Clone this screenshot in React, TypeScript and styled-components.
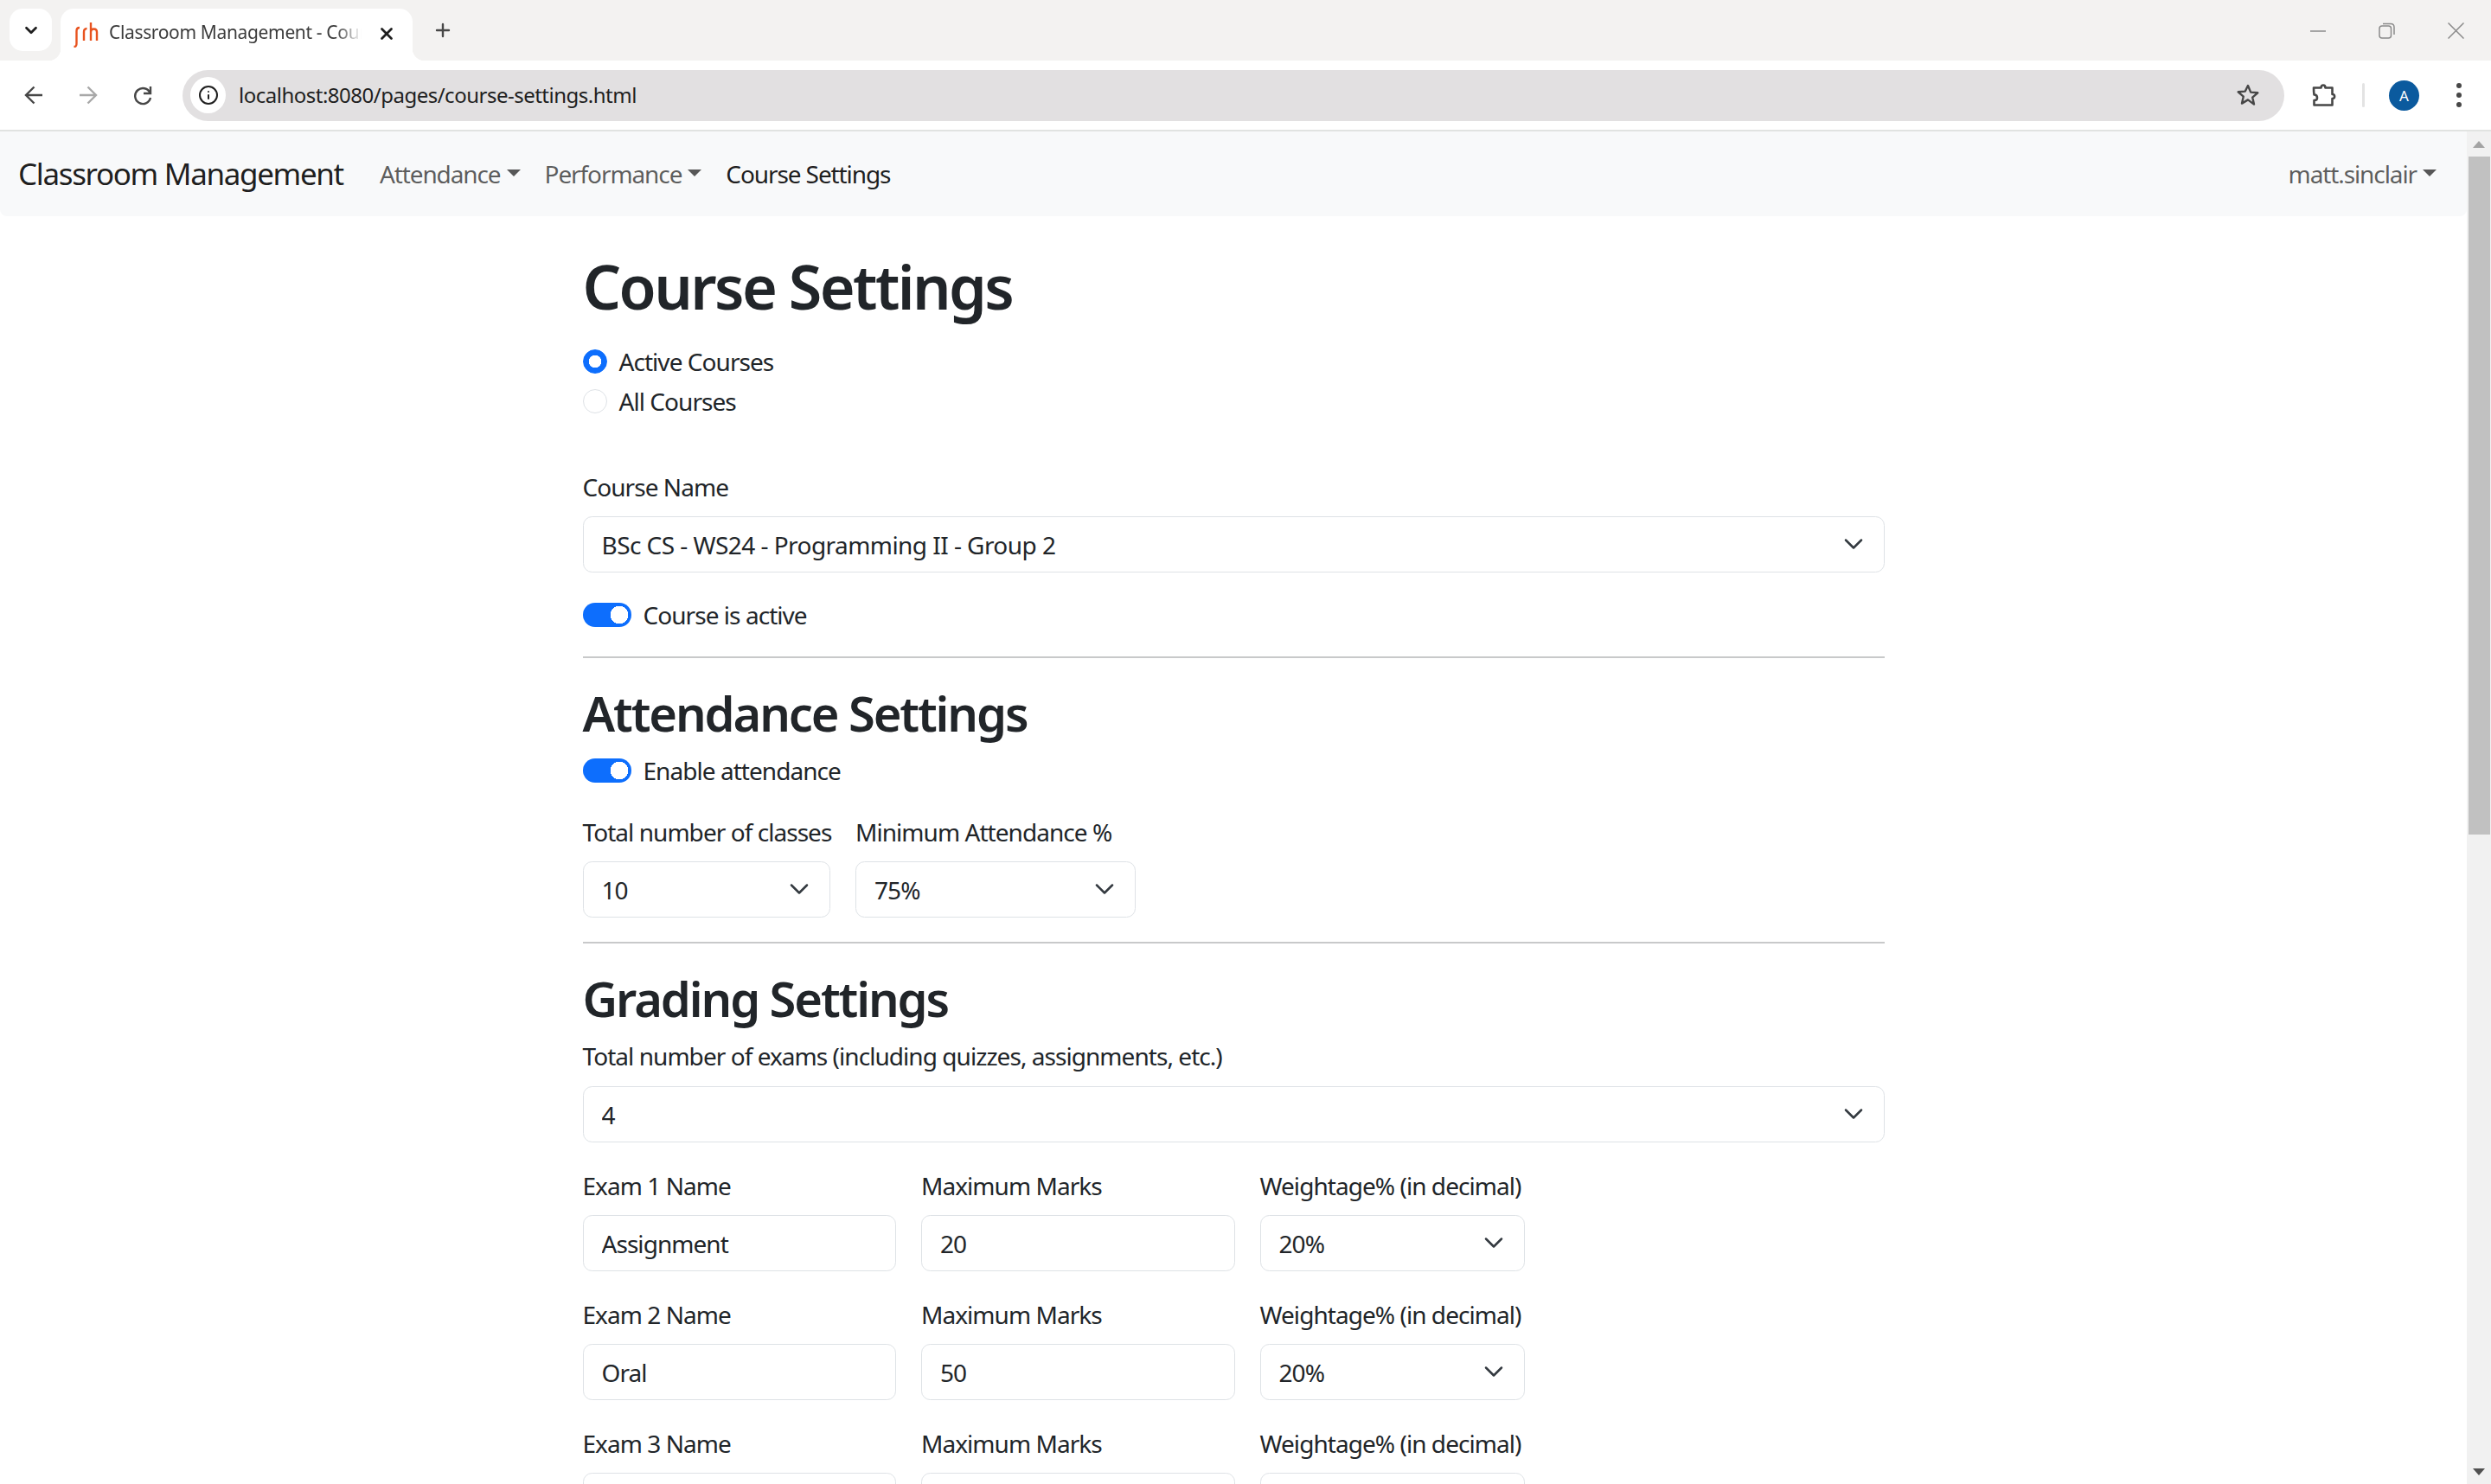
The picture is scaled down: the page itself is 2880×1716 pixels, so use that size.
import React, { FC, ReactNode } from 'react'
import styled, { createGlobalStyle } from 'styled-components'
import { ChevronDown, Info, Plus, X } from 'lucide-react'

const font = `"Noto Sans", "Open Sans", sans-serif`

const GlobalStyle = createGlobalStyle`
  html, body { margin: 0; height: 100%; overflow: hidden; background: #fff; }
  * { box-sizing: border-box; }
  body { font-family: ${font}; font-size: 28px; line-height: 42px; color: #212529; letter-spacing: -0.95px; }
`

const Frame = styled.div`
  height: 100vh;
  display: flex;
  flex-direction: column;
  overflow: hidden;
`

/* browser chrome */
const TabStrip = styled.div`
  height: 70px;
  flex: none;
  background: #f3f2f1;
  display: flex;
  align-items: flex-start;
  padding: 10px 0 0 11px;
`
const TabSearch = styled.div`
  width: 49px;
  height: 49px;
  background: #fff;
  border-radius: 15px;
  display: flex;
  align-items: center;
  justify-content: center;
  color: #1f1f1f;
`
const Tab = styled.div`
  position: relative;
  margin-left: 10px;
  width: 407px;
  height: 60px;
  background: #fff;
  border-radius: 15px 15px 0 0;
  display: flex;
  align-items: center;
  padding: 0 19px 0 14px;
  & > svg:last-child {
    margin-bottom: 3px;
  }
  &::after {
    content: '';
    position: absolute;
    right: -14px;
    bottom: 0;
    width: 14px;
    height: 14px;
    background: radial-gradient(circle at 100% 0, transparent 14px, #fff 14.5px);
  }
  &::before {
    content: '';
    position: absolute;
    left: -14px;
    bottom: 0;
    width: 14px;
    height: 14px;
    background: radial-gradient(circle at 0 0, transparent 14px, #fff 14.5px);
  }
`
const TabTitle = styled.span`
  flex: 1;
  margin: 0 18px 6px 12px;
  font-size: 21px;
  line-height: 30px;
  letter-spacing: -0.35px;
  color: #3c3c3c;
  white-space: nowrap;
  overflow: hidden;
  -webkit-mask-image: linear-gradient(to right, #000 90%, transparent 100%);
  mask-image: linear-gradient(to right, #000 90%, transparent 100%);
`
const NewTab = styled.div`
  margin: 13px 0 0 23px;
  color: #474747;
  display: flex;
`
const WindowButtons = styled.div`
  margin-left: auto;
  display: flex;
  align-items: center;
  gap: 61px;
  padding: 16px 31px 0 0;
`
const Toolbar = styled.div`
  height: 80px;
  flex: none;
  background: #fff;
  border-radius: 14px 18px 0 0;
  display: flex;
  align-items: center;
  padding: 0 34px 0 28px;
`
const NavIcons = styled.div`
  display: flex;
  align-items: center;
  gap: 41px;
  margin-right: 35px;
`
const Address = styled.div`
  flex: 1;
  height: 59px;
  border-radius: 30px;
  background: #e2e0e1;
  display: flex;
  align-items: center;
  padding: 0 28px 0 9px;
`
const InfoChip = styled.div`
  width: 41px;
  height: 42px;
  border-radius: 50%;
  background: #fff;
  display: flex;
  align-items: center;
  justify-content: center;
  color: #1f1f1f;
`
const Url = styled.span`
  flex: 1;
  margin-left: 15px;
  font-size: 24px;
  line-height: 32px;
  letter-spacing: -0.5px;
  color: #1f1f1f;
`
const ToolbarRight = styled.div`
  display: flex;
  align-items: center;
  margin-left: 31px;
`
const Separator = styled.div`
  width: 3px;
  height: 28px;
  background: #e3e3e3;
  border-radius: 2px;
  margin: 0 28px 0 29px;
`
const Avatar = styled.div`
  width: 35px;
  height: 35px;
  border-radius: 50%;
  background: #0b5a9e;
  color: #fff;
  font-size: 17px;
  line-height: 35px;
  text-align: center;
  letter-spacing: 0;
  margin-right: 43px;
`
const Dots = styled.div`
  display: flex;
  flex-direction: column;
  gap: 5px;
  width: 6px;
  & > i {
    width: 6px;
    height: 6px;
    border-radius: 50%;
    background: #474747;
  }
`
const Viewport = styled.div`
  flex: 1;
  min-height: 0;
  display: flex;
  border-top: 2px solid #e1e3e1;
`
const Page = styled.div`
  flex: 1;
  min-width: 0;
  overflow: hidden;
`
const ScrollBar = styled.div`
  width: 28px;
  flex: none;
  background: #f1f1f1;
  display: flex;
  flex-direction: column;
`
const ScrollArrow = styled.div`
  height: 29px;
  flex: none;
  display: flex;
  align-items: center;
  justify-content: center;
`
const ScrollTrack = styled.div`
  flex: 1;
  padding: 0 1px 0 2px;
`
const ScrollThumb = styled.div`
  height: 784px;
  background: #c1c1c1;
`

/* bootstrap navbar */
const Navbar = styled.nav`
  height: 98px;
  background: #f8f9fa;
  border-radius: 0 0 8px 8px;
  display: flex;
  align-items: center;
  padding: 0 21px;
`
const Brand = styled.a`
  font-size: 35px;
  line-height: 52px;
  color: rgba(0, 0, 0, 0.9);
  margin-right: 28px;
  letter-spacing: -1.35px;
`
const NavLink = styled.a<{ $active?: boolean; $end?: boolean }>`
  padding: 14px;
  display: flex;
  align-items: center;
  letter-spacing: -1.1px;
  color: ${({ $active }) => ($active ? 'rgba(0, 0, 0, 0.9)' : 'rgba(0, 0, 0, 0.65)')};
  margin-left: ${({ $end }) => ($end ? 'auto' : '0')};
`
const Caret = styled.span`
  width: 0;
  height: 0;
  margin-left: 7px;
  margin-top: -3px;
  border-top: 8.4px solid currentColor;
  border-left: 8.4px solid transparent;
  border-right: 8.4px solid transparent;
`

/* form */
const Main = styled.main`
  width: 1505px;
  margin: 0 auto;
  padding-top: 39px;
`
const Title = styled.h1`
  margin: 0 0 24px;
  font-size: 70px;
  line-height: 84px;
  font-weight: 600;
  letter-spacing: -2.6px;
`
const SectionTitle = styled.h2`
  margin: 0 0 12px;
  padding-top: 2px;
  font-size: 56px;
  line-height: 67px;
  font-weight: 600;
  letter-spacing: -2.1px;
`
const Check = styled.label<{ $gap?: number; $top?: number }>`
  display: flex;
  align-items: center;
  height: 42px;
  gap: 14px;
  margin-top: ${({ $top }) => $top ?? 0}px;
  margin-bottom: ${({ $gap }) => $gap ?? 0}px;
`
const Radio = styled.input.attrs({ type: 'radio', name: 'filter' })`
  appearance: none;
  width: 28px;
  height: 28px;
  margin: 0;
  border-radius: 50%;
  border: 1px solid #dee2e6;
  background: #fff;
  &:checked {
    border-color: #0d6efd;
    background: radial-gradient(circle, #fff 7px, #0d6efd 7.5px);
  }
`
const Switch = styled.input.attrs({ type: 'checkbox', defaultChecked: true })`
  appearance: none;
  width: 56px;
  height: 28px;
  margin: 0;
  border-radius: 14px;
  background: radial-gradient(circle 10.5px at 42px 14px, #fff 97%, transparent 100%), #0d6efd;
`
const Label = styled.label<{ $gap?: number }>`
  display: block;
  height: 42px;
  margin-bottom: ${({ $gap }) => $gap ?? 13}px;
  white-space: nowrap;
`
const SelectBox = styled.div`
  position: relative;
  width: 100%;
  & > svg {
    position: absolute;
    right: 24px;
    top: 20px;
    pointer-events: none;
    color: #343a40;
  }
`
const Select = styled.select<{ $spacing?: number }>`
  appearance: none;
  display: block;
  width: 100%;
  height: 65px;
  padding: 0 70px 0 21px;
  border: 1px solid #dee2e6;
  border-radius: 10.5px;
  background: #fff;
  color: #212529;
  font: inherit;
  letter-spacing: ${({ $spacing }) => ($spacing !== undefined ? `${$spacing}px` : 'inherit')};
`
const TextInput = styled.input.attrs({ type: 'text', readOnly: true })`
  display: block;
  width: 100%;
  height: 65px;
  padding: 0 21px;
  border: 1px solid #dee2e6;
  border-radius: 10.5px;
  background: #fff;
  color: #212529;
  font: inherit;
  letter-spacing: inherit;
`
const Rule = styled.hr<{ $top: number }>`
  margin: ${({ $top }) => $top}px 0 28px;
  border: 0;
  border-top: 2px solid #c8c9ca;
`
const Row = styled.div<{ $columns: string; $bottom?: number }>`
  display: grid;
  grid-template-columns: ${({ $columns }) => $columns};
  column-gap: 29px;
  margin-bottom: ${({ $bottom }) => $bottom ?? 0}px;
`
const RadioGroup = styled.div`
  margin-bottom: 57px;
`
const ExamList = styled.div`
  padding-top: 29px;
`

const Chevron: FC = () => (
  <svg width="24" height="24" viewBox="0 0 16 16" fill="none" stroke="currentColor" strokeWidth="1.7" strokeLinecap="round" strokeLinejoin="round">
    <path d="m2 5 6 6 6-6" />
  </svg>
)

const Dropdown: FC<{ value: string; spacing?: number }> = ({ value, spacing }) => (
  <SelectBox>
    <Select defaultValue={value} $spacing={spacing}>
      <option>{value}</option>
    </Select>
    <Chevron />
  </SelectBox>
)

const Field: FC<{ label: string; children: ReactNode }> = ({ label, children }) => (
  <div>
    <Label>{label}</Label>
    {children}
  </div>
)

const SrhLogo: FC = () => (
  <svg width="30" height="30" viewBox="0 0 30 30" fill="none" stroke="#e8531f" strokeWidth="2.4">
    <path d="M1.5 29c2.5 0 3-1.5 3-4V11c0-3 1-4 3.5-4" />
    <path d="M13 22V12c0-2.500 1-4 3.500-4" />
    <path d="M21 22V1M21 12c0-2 1.500-3.500 3.500-3.500S28 10 28 12v10" />
  </svg>
)

const BackIcon: FC<{ color: string; flip?: boolean }> = ({ color, flip }) => (
  <svg width="22" height="22" viewBox="0 0 22 22" fill="none" stroke={color} strokeWidth="2.4" style={flip ? { transform: 'scaleX(-1)' } : undefined}>
    <path d="M21 11H2.500M11.500 1.500 2 11l9.500 9.500" />
  </svg>
)

const ReloadIcon: FC = () => (
  <svg width="22" height="24" viewBox="0 0 22 24" fill="none" stroke="#474747" strokeWidth="2.400">
    <path d="M19.500 9.500A9 9 0 1 0 20 15" />
    <path d="M20 2v8h-8" />
  </svg>
)

const StarIcon: FC = () => (
  <svg width="28" height="28" viewBox="0 0 28 28" fill="none" stroke="#474747" strokeWidth="2.400" strokeLinejoin="round">
    <path d="m14 3 3.200 7.600 8.100.7-6.100 5.300 1.800 8L14 19.400l-7 4.200 1.800-8-6.100-5.300 8.100-.7z" />
  </svg>
)

const PuzzleIcon: FC = () => (
  <svg width="30" height="30" viewBox="0 0 30 30" fill="none" stroke="#474747" strokeWidth="2.600" strokeLinejoin="round">
    <path d="M3 6.500h8.500c0-4 5-4 5 0H24.500v7.500c3.500 0 3.500 5 0 5V26.500H3.500V21c3 0 3.500-1 3.500-3s-.5-3.500-3.500-3.500c-.5-3-.5-5-.5-8z" />
  </svg>
)

const Minimize: FC = () => (
  <svg width="18" height="18" viewBox="0 0 18 18" stroke="#8b8b8b" strokeWidth="1.500">
    <path d="M0 9h18" />
  </svg>
)
const Restore: FC = () => (
  <svg width="19" height="19" viewBox="0 0 19 19" fill="none" stroke="#8b8b8b" strokeWidth="1.500">
    <rect x="1" y="4" width="13.500" height="14" rx="3" />
    <path d="M5 1.500h9c2.500 0 4 1.500 4 4V14" />
  </svg>
)
const Close: FC = () => (
  <svg width="19" height="19" viewBox="0 0 19 19" stroke="#8b8b8b" strokeWidth="1.500">
    <path d="m.5.500 18 18M18.500.500l-18 18" />
  </svg>
)

const Triangle: FC<{ color: string; down?: boolean }> = ({ color, down }) => (
  <svg width="14" height="8" viewBox="0 0 14 8" fill={color}>
    <path d={down ? 'M0 0h14L7 8z' : 'M7 0l7 8H0z'} />
  </svg>
)

const examColumns = '362.5px 362.5px 306px'

const exams = [
  { label: 'Exam 1 Name', name: 'Assignment', marks: '20', weight: '20%' },
  { label: 'Exam 2 Name', name: 'Oral', marks: '50', weight: '20%' },
  { label: 'Exam 3 Name', name: 'Midterm', marks: '30', weight: '20%' },
]

export default function App() {
  return (
    <Frame>
      <GlobalStyle />
      <TabStrip>
        <TabSearch>
          <ChevronDown size={22} strokeWidth={3} />
        </TabSearch>
        <Tab>
          <SrhLogo />
          <TabTitle>Classroom Management - Course Settings</TabTitle>
          <X size={22} strokeWidth={3} color="#1f1f1f" />
        </Tab>
        <NewTab>
          <Plus size={24} strokeWidth={2.4} />
        </NewTab>
        <WindowButtons>
          <Minimize />
          <Restore />
          <Close />
        </WindowButtons>
      </TabStrip>
      <Toolbar>
        <NavIcons>
          <BackIcon color="#474747" />
          <BackIcon color="#a8a8a8" flip />
          <ReloadIcon />
        </NavIcons>
        <Address>
          <InfoChip>
            <Info size={24} strokeWidth={2} />
          </InfoChip>
          <Url>localhost:8080/pages/course-settings.html</Url>
          <StarIcon />
        </Address>
        <ToolbarRight>
          <PuzzleIcon />
          <Separator />
          <Avatar>A</Avatar>
          <Dots>
            <i />
            <i />
            <i />
          </Dots>
        </ToolbarRight>
      </Toolbar>
      <Viewport>
        <Page>
          <Navbar>
            <Brand>Classroom Management</Brand>
            <NavLink>
              Attendance
              <Caret />
            </NavLink>
            <NavLink>
              Performance
              <Caret />
            </NavLink>
            <NavLink $active>Course Settings</NavLink>
            <NavLink $end>
              matt.sinclair
              <Caret />
            </NavLink>
          </Navbar>
          <Main>
            <Title>Course Settings</Title>
            <RadioGroup>
              <Check $gap={4}>
                <Radio defaultChecked />
                Active Courses
              </Check>
              <Check>
                <Radio />
                All Courses
              </Check>
            </RadioGroup>
            <Label>Course Name</Label>
            <Dropdown value="BSc CS - WS24 - Programming II - Group 2" spacing={-0.55} />
            <Check $top={28}>
              <Switch />
              Course is active
            </Check>
            <Rule $top={27} />
            <SectionTitle>Attendance Settings</SectionTitle>
            <Check $gap={29}>
              <Switch />
              Enable attendance
            </Check>
            <Row $columns="286.5px 324px">
              <Field label="Total number of classes">
                <Dropdown value="10" />
              </Field>
              <Field label="Minimum Attendance %">
                <Dropdown value="75%" />
              </Field>
            </Row>
            <Rule $top={28} />
            <SectionTitle>Grading Settings</SectionTitle>
            <Label $gap={14}>Total number of exams (including quizzes, assignments, etc.)</Label>
            <Dropdown value="4" />
            <ExamList>
              {exams.map(exam => (
                <Row key={exam.label} $columns={examColumns} $bottom={29}>
                  <Field label={exam.label}>
                    <TextInput value={exam.name} />
                  </Field>
                  <Field label="Maximum Marks">
                    <TextInput value={exam.marks} />
                  </Field>
                  <Field label="Weightage% (in decimal)">
                    <Dropdown value={exam.weight} />
                  </Field>
                </Row>
              ))}
            </ExamList>
          </Main>
        </Page>
        <ScrollBar>
          <ScrollArrow>
            <Triangle color="#a3a3a3" />
          </ScrollArrow>
          <ScrollTrack>
            <ScrollThumb />
          </ScrollTrack>
          <ScrollArrow>
            <Triangle color="#505050" down />
          </ScrollArrow>
        </ScrollBar>
      </Viewport>
    </Frame>
  )
}
